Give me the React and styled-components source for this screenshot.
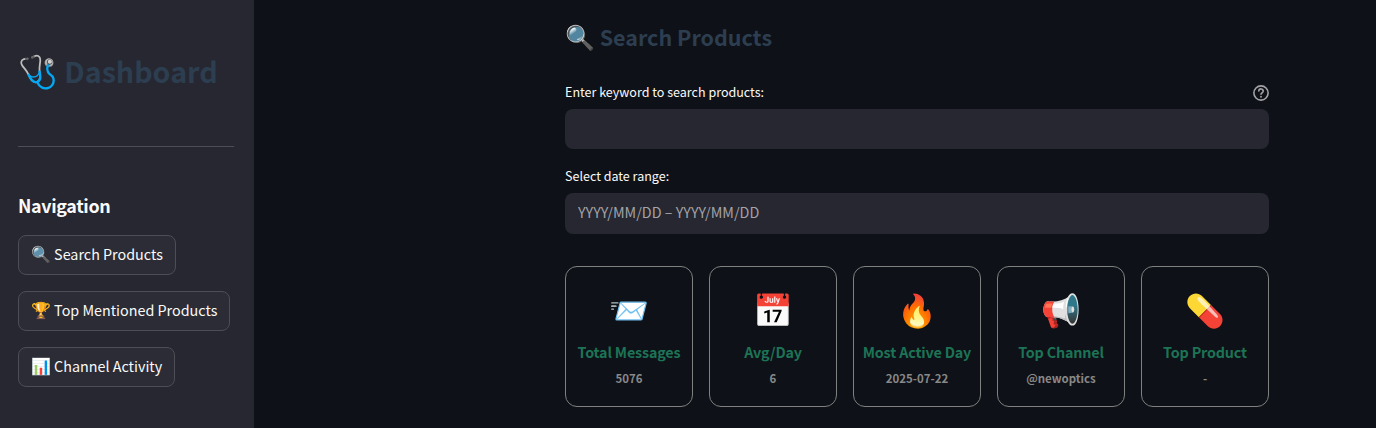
import React from "react";
import styled, { createGlobalStyle } from "styled-components";

const GlobalStyle = createGlobalStyle`
  *, *::before, *::after { box-sizing: border-box; }
  body {
    margin: 0;
    background: #0e1117;
    color: #fafafa;
    font-family: "Noto Sans CJK SC", "Noto Sans", sans-serif;
    font-size: 14.33px;
  }
`;

const Page = styled.div`
  display: flex;
  height: 428px;
  overflow: hidden;
`;

const Sidebar = styled.aside`
  flex: 0 0 254px;
  padding: 52px 20px 0 18px;
  background: #262730;
`;

const Emoji = styled.span`
  flex: none;
  font-family: "Noto Color Emoji", sans-serif;
  font-size: ${(p) => p.$size}px;
  line-height: 1;
  font-weight: 400;
`;

const Text = styled.span`
  padding-bottom: 2px;
`;

const Title = styled.h1`
  display: flex;
  align-items: center;
  gap: 6.4px;
  margin: 0;
  height: 40px;
  color: #2c3e50;
  font-size: 28.66px;
  font-weight: 700;
  line-height: 38px;
  white-space: nowrap;
`;

const Divider = styled.hr`
  margin: 54px 0 46px;
  border: 0;
  border-top: 1px solid #4c4d55;
`;

const NavHeading = styled.h3`
  margin: 0 0 18px;
  font-size: 17.9px;
  font-weight: 600;
  letter-spacing: -0.35px;
  line-height: 24px;
`;

const Nav = styled.nav`
  display: flex;
  flex-direction: column;
  align-items: flex-start;
  gap: 16px;
`;

const NavButton = styled.button`
  display: flex;
  align-items: center;
  gap: 3.2px;
  height: 40px;
  padding: 0 12px;
  border: 1px solid #4c4d55;
  border-radius: 8px;
  background: #2b2c36;
  color: #fafafa;
  font: inherit;
  line-height: 24px;
  white-space: nowrap;
`;

const Main = styled.main`
  flex: 1;
  padding: 20px 107px 0 311px;
`;

const SectionTitle = styled.h2`
  display: flex;
  align-items: center;
  gap: 4.8px;
  margin: 0 0 27px;
  height: 36px;
  color: #2c3e50;
  font-size: 21.5px;
  font-weight: 700;
  line-height: 34px;
`;

const Field = styled.div`
  margin-bottom: ${(p) => p.$gap}px;
`;

const Label = styled.label`
  display: flex;
  align-items: center;
  justify-content: space-between;
  height: 17px;
  margin-bottom: 9px;
  font-size: 12.54px;
  line-height: 17px;
`;

const Input = styled.input`
  display: block;
  width: 100%;
  height: ${(p) => p.$height}px;
  padding: 0 13px 5px;
  border: 0;
  border-radius: 8px;
  outline: 0;
  background: #262730;
  color: #fafafa;
  font: inherit;
  font-size: 14.33px;
  &::placeholder { color: #a3a3a8; opacity: 1; }
`;

const Cards = styled.div`
  display: grid;
  grid-template-columns: repeat(5, 1fr);
  gap: 16px;
`;

const Card = styled.div`
  display: flex;
  flex-direction: column;
  align-items: center;
  height: 141px;
  padding-top: 24px;
  border: 1px solid #808080;
  border-radius: 12px;
  text-align: center;
  white-space: nowrap;
`;

const CardIcon = styled.div`
  display: flex;
  align-items: center;
  height: 40px;
`;

const CardTitle = styled.div`
  margin-top: 9px;
  color: #1d7355;
  font-size: 14.33px;
  font-weight: 600;
  letter-spacing: -0.16px;
  line-height: 24px;
`;

const CardValue = styled.div`
  margin-top: 4px;
  color: #888888;
  font-size: 11.46px;
  font-weight: 700;
  line-height: 20px;
`;

const HelpGlyph = styled.svg`
  margin-bottom: -2px;
`;

const navItems = [
  ["🔍", "Search Products"],
  ["🏆", "Top Mentioned Products"],
  ["📊", "Channel Activity"],
];

const stats = [
  ["📨", "Total Messages", "5076"],
  ["📅", "Avg/Day", "6"],
  ["🔥", "Most Active Day", "2025-07-22"],
  ["📢", "Top Channel", "@newoptics"],
  ["💊", "Top Product", "-"],
];

function HelpIcon() {
  return (
    <HelpGlyph width="16" height="16" viewBox="1 1 22 22" fill="none" stroke="#a3a3a8" strokeWidth="2.2" strokeLinecap="round" strokeLinejoin="round">
      <circle cx="12" cy="12" r="9.8" />
      <path d="M9 9.2a3 3 0 0 1 6 .4c0 2-3 2.2-3 4.2" />
      <path d="M12 17.2h.01" strokeWidth="2.6" />
    </HelpGlyph>
  );
}

export default function App() {
  return (
    <Page>
      <GlobalStyle />
      <Sidebar>
        <Title><Emoji $size={32}>🩺</Emoji><Text>Dashboard</Text></Title>
        <Divider />
        <NavHeading>Navigation</NavHeading>
        <Nav>
          {navItems.map(([icon, text]) => (
            <NavButton key={text}><Emoji $size={16}>{icon}</Emoji><Text>{text}</Text></NavButton>
          ))}
        </Nav>
      </Sidebar>
      <Main>
        <SectionTitle><Emoji $size={24}>🔍</Emoji><Text>Search Products</Text></SectionTitle>
        <Field $gap={18}>
          <Label htmlFor="keyword">Enter keyword to search products:<HelpIcon /></Label>
          <Input id="keyword" $height={40} />
        </Field>
        <Field $gap={32}>
          <Label htmlFor="range">Select date range:</Label>
          <Input id="range" $height={41} placeholder="YYYY/MM/DD – YYYY/MM/DD" />
        </Field>
        <Cards>
          {stats.map(([icon, title, value]) => (
            <Card key={title}>
              <CardIcon><Emoji $size={32}>{icon}</Emoji></CardIcon>
              <CardTitle>{title}</CardTitle>
              <CardValue>{value}</CardValue>
            </Card>
          ))}
        </Cards>
      </Main>
    </Page>
  );
}
